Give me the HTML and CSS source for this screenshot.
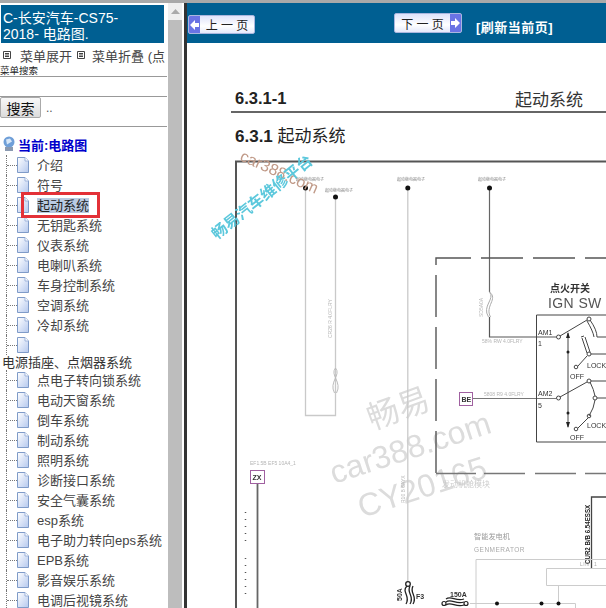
FILE: index.html
```html
<!DOCTYPE html>
<html lang="zh">
<head>
<meta charset="utf-8">
<title>电路图</title>
<link rel="stylesheet" href="styles.css">
</head>
<body>
<svg class="defs" width="0" height="0">
  <defs>
    <linearGradient id="pg" x1="0" y1="0" x2="1" y2="1">
      <stop offset="0" stop-color="#ffffff"/>
      <stop offset="1" stop-color="#b4c8ee"/>
    </linearGradient>
    <symbol id="page" viewBox="0 0 12 16">
      <path d="M.5.5H8L11.5 4V15.5H.5Z" fill="url(#pg)" stroke="#7f9bc8"/>
      <path d="M8 .5V4H11.5" fill="#fff" stroke="#9fb5dc"/>
    </symbol>
    <symbol id="box" viewBox="0 0 8 8">
      <path d="M.5.5H7.5V7.5H.5Z" fill="#fff" stroke="#444"/>
      <path d="M2 2.5H6M2 4H6M2 5.500H6" stroke="#444"/>
    </symbol>
  </defs>
</svg>
<div class="app">
  <aside class="side">
    <div class="side-pane">
      <div class="title">C-长安汽车-CS75-<br>2018- 电路图.</div>
      <div class="menu">
        <svg class="mi"><use href="#box"/></svg><span>菜单展开</span>
        <svg class="mi mi-b"><use href="#box"/></svg><span>菜单折叠 (点</span>
      </div>
      <div class="small">菜单搜索</div>
      <div class="input-row"></div>
      <div class="search-row"><button class="search">搜索</button><span class="dots">..</span></div>
      <div class="current">
        <svg class="cur-ic" viewBox="0 0 13 16"><circle cx="7" cy="6" r="5.500" fill="#6f9fd8"/><path d="M4 3.500l4-1 2 3-5 3z" fill="#d8e8f8"/><path d="M3 11h8v4H3z" fill="#8a99b0"/></svg>
        <span>当前:电路图</span>
      </div>
      <ul class="tree">
        <li class="row"><svg class="pg"><use href="#page"/></svg><span>介绍</span></li>
        <li class="row"><svg class="pg"><use href="#page"/></svg><span>符号</span></li>
        <li class="row active"><svg class="pg"><use href="#page"/></svg><span class="sel">起动系统</span></li>
        <li class="row"><svg class="pg"><use href="#page"/></svg><span>无钥匙系统</span></li>
        <li class="row"><svg class="pg"><use href="#page"/></svg><span>仪表系统</span></li>
        <li class="row"><svg class="pg"><use href="#page"/></svg><span>电喇叭系统</span></li>
        <li class="row"><svg class="pg"><use href="#page"/></svg><span>车身控制系统</span></li>
        <li class="row"><svg class="pg"><use href="#page"/></svg><span>空调系统</span></li>
        <li class="row"><svg class="pg"><use href="#page"/></svg><span>冷却系统</span></li>
        <li class="row"><svg class="pg"><use href="#page"/></svg><span></span></li>
        <li class="label">电源插座、点烟器系统</li>
        <li class="row"><svg class="pg"><use href="#page"/></svg><span>点电子转向锁系统</span></li>
        <li class="row"><svg class="pg"><use href="#page"/></svg><span>电动天窗系统</span></li>
        <li class="row"><svg class="pg"><use href="#page"/></svg><span>倒车系统</span></li>
        <li class="row"><svg class="pg"><use href="#page"/></svg><span>制动系统</span></li>
        <li class="row"><svg class="pg"><use href="#page"/></svg><span>照明系统</span></li>
        <li class="row"><svg class="pg"><use href="#page"/></svg><span>诊断接口系统</span></li>
        <li class="row"><svg class="pg"><use href="#page"/></svg><span>安全气囊系统</span></li>
        <li class="row"><svg class="pg"><use href="#page"/></svg><span>esp系统</span></li>
        <li class="row"><svg class="pg"><use href="#page"/></svg><span>电子助力转向eps系统</span></li>
        <li class="row"><svg class="pg"><use href="#page"/></svg><span>EPB系统</span></li>
        <li class="row"><svg class="pg"><use href="#page"/></svg><span>影音娱乐系统</span></li>
        <li class="row"><svg class="pg"><use href="#page"/></svg><span>电调后视镜系统</span></li>
      </ul>
    </div>
    <div class="scroll"><div class="scroll-up"><svg width="9" height="5" viewBox="0 0 9 5"><path d="M4.500 0L9 5H0Z" fill="#aaa"/></svg></div></div>
  </aside>
  <main class="content">
    <nav class="nav">
      <a class="btn prev"><span class="cap"><svg width="9" height="10" viewBox="0 0 9 10"><path d="M0 5L5 0V3H9V7H5V10Z" fill="#fff"/></svg></span><span class="btn-t">上 一 页</span></a>
      <a class="btn next"><span class="btn-t">下 一 页</span><span class="cap"><svg width="9" height="10" viewBox="0 0 9 10"><path d="M9 5L4 0V3H0V7H4V10Z" fill="#fff"/></svg></span></a>
      <a class="refresh">[刷新当前页]</a>
    </nav>
    <section class="doc">
      <div class="doc-head"><b class="code">6.3.1-1</b><span class="doc-name">起动系统</span></div>
      <h1 class="doc-title"><b>6.3.1</b> 起动系统</h1>
      <svg class="diagram" viewBox="187 150 419 458" width="419" height="458">
        <!-- large grey watermark -->
        <g class="wm">
          <text transform="translate(372 430) rotate(-20)">畅易</text>
          <text transform="translate(334 484) rotate(-18)">car388.com</text>
          <text transform="translate(362 518) rotate(-18)">CY20165</text>
        </g>
        <!-- frame -->
        <path d="M236 608V161.500H606" fill="none" stroke="#555" stroke-width="2"/>
        <!-- supply lines -->
        <g fill="none" stroke="#c9c9c9" stroke-width="1.300">
          <path d="M305.500 188V415.500H335.500V197"/>
          <path d="M407.800 188V582"/>
        </g>
        <path d="M489.500 188V292" stroke="#666" stroke-width="1.200"/>
        <g fill="#111">
          <circle cx="305.500" cy="188" r="2.500"/>
          <circle cx="335.500" cy="197" r="2.500"/>
          <circle cx="407.800" cy="188" r="2.500"/>
          <circle cx="489.500" cy="188" r="2.500"/>
        </g>
        <g class="micro">
          <text x="296" y="181">起动继电器电子</text>
          <text x="325" y="192">起动继电器电子</text>
          <text x="397" y="181">起动继电器电子</text>
          <text x="478" y="181">起动继电器电子</text>
        </g>
        <text class="wire" transform="translate(332 338) rotate(-90)">CR26 R 4.0FLRY</text>
        <text class="wire" transform="translate(405 503) rotate(-90)">R10 B 6AYX</text>
        <g fill="none" stroke="#bbb" stroke-width="1"><path d="M335.500 368c6 7-7 14-1 25"/><path d="M335.500 368c-6 7 7 14 1 25"/></g>
        <!-- dashed box -->
        <path d="M436 473V258H606" fill="none" stroke="#555" stroke-width="1.400" stroke-dasharray="42 10"/>
        <path d="M436 473.500H476M484 473.500H525M535 473.500H576M585 473.500H606" fill="none" stroke="#777" stroke-width="1.400"/>
        <!-- fuse -->
        <g fill="none" stroke="#aaa" stroke-width="1"><path d="M489.500 292c6 7-8 14-1 25"/><path d="M489.500 292c9 7-5 14 1 25"/></g>
        <path d="M489.500 317V337H556" fill="none" stroke="#555" stroke-width="1.200"/>
        <text class="wire" x="482" y="343">58% RW 4.0FLRY</text>
        <text class="wire" x="484" y="396">5808 R9 4.0FLRY</text>
        <text class="wire" transform="translate(483 317) rotate(-90)">SD5A0A</text>
        <!-- BE connector -->
        <rect class="conn" x="459.500" y="392.500" width="13" height="13"/>
        <text class="pin b" x="461.500" y="401.500">BE</text>
        <path d="M473 398.500H556" stroke="#777" stroke-width="1"/>
        <!-- ignition switch -->
        <text class="ign-cn" x="570" y="292">点火开关</text>
        <text class="ign" x="548" y="308">IGN SW</text>
        <path d="M606 315H536.500V442H606" fill="none" stroke="#444" stroke-width="1"/>
        <g class="pin">
          <text x="538" y="335">AM1</text>
          <text x="538" y="346">1</text>
          <text x="538" y="396">AM2</text>
          <text x="538" y="408">5</text>
          <text x="587" y="368">LOCK</text>
          <text x="570" y="379">OFF</text>
          <text x="587" y="428">LOCK</text>
          <text x="570" y="440">OFF</text>
        </g>
        <g fill="none" stroke="#444" stroke-width="1">
          <circle cx="558.500" cy="337" r="2"/>
          <circle cx="589" cy="319" r="2"/>
          <path d="M560 336L587 320"/>
          <path d="M590 320Q597 330 597 337M587 321Q593 331 594 337M597 337H606"/>
          <path d="M568 333V427"/>
          <path d="M585 337L590 352M582 338L587 353M584 336L581 337"/>
          <circle cx="589" cy="354" r="2"/>
          <path d="M591 354H606M587 356L578 366"/>
          <circle cx="576" cy="367" r="1.800"/>
          <circle cx="558.500" cy="398" r="2"/>
          <circle cx="589" cy="381" r="2"/>
          <path d="M560 397L587 382M591 381H606"/>
          <circle cx="595" cy="398" r="2"/>
          <path d="M597 398H606M590 382Q594 390 595 396M595 400Q594 408 589 416"/>
          <circle cx="589" cy="416" r="1.800"/>
          <path d="M588 418L578 428"/>
          <circle cx="576" cy="429" r="1.800"/>
        </g>
        <g fill="#222">
          <circle cx="568" cy="352" r="1.500"/>
          <circle cx="568" cy="413" r="1.500"/>
          <path d="M568 332l-2 6h4ZM568 428l-2-6h4Z"/>
        </g>
        <!-- ZX connector -->
        <text class="wire" x="250" y="465">EF1.5B EF5 10A4_1</text>
        <rect class="conn" x="250.500" y="470.500" width="14" height="13"/>
        <text class="pin b" x="252.500" y="480">ZX</text>
        <path d="M257.500 484V608" stroke="#666" stroke-width="1.800"/>
        <path d="M245.500 512V545M245.500 558V600" stroke="#555" stroke-width="1.500" stroke-dasharray="1 6"/>
        <!-- F3 fuse -->
        <g fill="none" stroke="#222" stroke-width="1.300">
          <circle cx="408" cy="584" r="2.300"/>
          <path d="M407 586c-6 6 4 10-1 18M410 586c-4 7 5 10 0 18M413 586c-4 7 5 10 0 18"/>
        </g>
        <text class="pin b" transform="translate(402 601) rotate(-90)">50A</text>
        <text class="pin b" x="416" y="599">F3</text>
        <!-- module label -->
        <text class="faint" x="442" y="487">发动机舱模块</text>
        <!-- generator -->
        <path d="M606 497H591.500V568" fill="none" stroke="#444" stroke-width="1.300"/>
        <text class="cable" transform="translate(590 564) rotate(-90) scale(.88 1)">CUR2 B/B 6.54ESSX</text>
        <text class="gen-cn" x="474" y="539">智能发电机</text>
        <text class="gen-en" x="474" y="552">GENMERATOR</text>
        <g fill="none" stroke="#ccc" stroke-width="1">
          <path d="M476 608V559.500H606"/>
          <path d="M606 568.500H546.500V585.500H606"/>
          <path d="M558.500 586V603M470 603.500H575.500V608"/>
        </g>
        <text class="gen-en small-l" x="580" y="566">LIN</text>
        <text class="gen-en small-l" x="594" y="566">1</text>
        <g fill="#111"><circle cx="497" cy="603.500" r="2"/><circle cx="541.500" cy="603.500" r="2"/><circle cx="558.500" cy="603.500" r="2"/></g>
        <text class="pin b" x="450" y="597">150A</text>
        <g fill="none" stroke="#222" stroke-width="1.200">
          <circle cx="444" cy="603.500" r="2"/>
          <circle cx="466" cy="603.500" r="2"/>
          <path d="M446 602c5-4 10 3 18 0M446 605c5-4 10 3 18 0M446 599c5-4 10 3 18 0"/>
        </g>
        <!-- coloured watermarks -->
        <text class="wm-brown" transform="translate(239 160) rotate(24)">car388.com</text>
        <text class="wm-cyan" transform="translate(217 240) rotate(-38.600)">畅易汽车维修平台</text>
      </svg>
    </section>
  </main>
</div>
</body>
</html>
```

FILE: styles.css
```css
* { box-sizing: border-box; }
html, body { margin: 0; height: 100%; overflow: hidden; }
body { font-family: "Liberation Sans", "Noto Sans CJK SC", sans-serif; background: #fff; color: #333; }
.defs { display: block; height: 0; }
.app { display: flex; height: 608px; border-top: 3px solid #a9a9a9; }
.side { display: flex; width: 184px; flex: none; }
.side-pane { width: 167px; overflow: hidden; padding-top: 2px; }
.title { margin-left: 1px; width: 163px; height: 38px; background: #005f92; color: #fff; font-size: 14px; line-height: 16px; padding: 5px 2px 0; }
.menu { display: flex; align-items: center; height: 20px; margin-top: 2px; padding-left: 3px; font-size: 13px; white-space: nowrap; color: #444; }
.mi { width: 8px; height: 8px; margin-right: 9px; flex: none; }
.mi-b { margin-right: 7px; }
.menu span { margin-right: 5px; }
.small { font-size: 9.500px; line-height: 11px; color: #222; border-bottom: 1px solid #999; height: 12px; }
.input-row { height: 20px; border-bottom: 1px solid #999; }
.search-row { display: flex; align-items: center; height: 30px; border-bottom: 1px solid #999; padding-bottom: 8px; }
.search { width: 41px; height: 21px; padding: 0; font: 14px "Liberation Sans", "Noto Sans CJK SC", sans-serif; color: #111; background: linear-gradient(#f8f8f8, #dcdcdc); border: 1px solid #aaa; border-radius: 2px; }
.dots { margin-left: 5px; font-size: 12px; color: #555; }
.current { display: flex; align-items: center; height: 20px; margin-top: 7px; padding-left: 2px; gap: 3px; font-size: 13px; font-weight: 700; color: #0000cc; }
.cur-ic { width: 13px; height: 16px; flex: none; }
.tree { list-style: none; margin: 1px 0 0; padding: 0; }
.row { position: relative; display: flex; align-items: center; height: 20px; padding-left: 17px; font-size: 13px; white-space: nowrap; color: #444; }
.row::before { content: ""; position: absolute; left: 6px; top: 0; bottom: 0; width: 10px; border-left: 1px dotted #777; }
.row::after { content: ""; position: absolute; left: 7px; top: 10px; width: 10px; border-top: 1px dotted #777; }
.pg { width: 12px; height: 16px; flex: none; margin-right: 8px; position: relative; z-index: 1; }
.row span { display: inline-block; line-height: 15px; }
.row span.sel { position: relative; background: #b9cbe3; color: #222; }
.sel::after { content: ""; position: absolute; left: -16px; right: -11px; top: -6px; bottom: -5px; border: 3px solid #e33138; z-index: 2; }
.label { height: 15px; line-height: 15px; padding-left: 2px; font-size: 13px; color: #333; white-space: nowrap; }
.scroll { width: 14px; margin-left: 1px; background: #bdbdbd; }
.scroll-up { display: flex; align-items: center; justify-content: center; height: 17px; background: #efefef; }
.content { flex: 1; min-width: 0; display: flex; flex-direction: column; border-left: 3px solid #333; }
.nav { display: flex; align-items: flex-start; height: 40px; background: #005f92; flex: none; padding-left: 1px; }
.btn { display: flex; align-items: center; height: 19px; width: 67px; margin-top: 12px; background: linear-gradient(#dfe3fb, #fff 60%, #e4e8fb); border: 1px solid #aab6de; border-radius: 2px; font-size: 12px; color: #222; overflow: hidden; }
.next { margin-top: 10px; margin-left: 139px; height: 20px; width: 68px; }
.cap { display: flex; align-items: center; justify-content: center; width: 11px; height: 100%; flex: none; background: #6a73e4; }
.btn-t { flex: 1; text-align: center; white-space: nowrap; }
.refresh { margin: 16px 0 0 14px; font-size: 13px; font-weight: 700; line-height: 18px; letter-spacing: .5px; color: #fff; white-space: nowrap; }
.doc { flex: 1; min-height: 0; background: #fff; overflow: hidden; }
.doc-head { display: flex; justify-content: space-between; align-items: center; height: 31px; margin: 39px 0 0 44px; padding: 4px 23px 0 4px; border-bottom: 2px solid #666; color: #222; }
.code { font-size: 16.500px; }
.doc-name { font-size: 17px; color: #333; }
.doc-title { margin: 12px 0 0 48px; height: 25px; line-height: 24px; font-size: 17px; font-weight: 400; color: #222; white-space: nowrap; }
.diagram { display: block; filter: blur(.35px); }
.micro text { font-size: 4px; fill: #888; }
.wire { font-size: 5px; fill: #b5b5b5; }
.faint { font-size: 8px; fill: #ccc; }
.ign-cn { font-size: 10px; fill: #333; font-weight: 700; text-anchor: middle; }
.ign { font-size: 14px; fill: #555; letter-spacing: .4px; }
.pin { font-size: 7px; fill: #333; }
.b { font-weight: 700; }
.conn { fill: #fff; stroke: #a060a0; stroke-width: 1; }
.cable { font-size: 7px; font-weight: 700; fill: #222; }
.gen-cn { font-size: 7.200px; fill: #999; }
.gen-en { font-size: 6.500px; letter-spacing: .5px; fill: #aaa; }
.small-l { font-size: 5px; }
.wm text { font-size: 32px; fill: #dcdcdc; }
.wm-brown { font-size: 16px; fill: #c09a88; }
.wm-cyan { font-size: 15.500px; font-weight: 700; fill: #5cc8dc; }
```
